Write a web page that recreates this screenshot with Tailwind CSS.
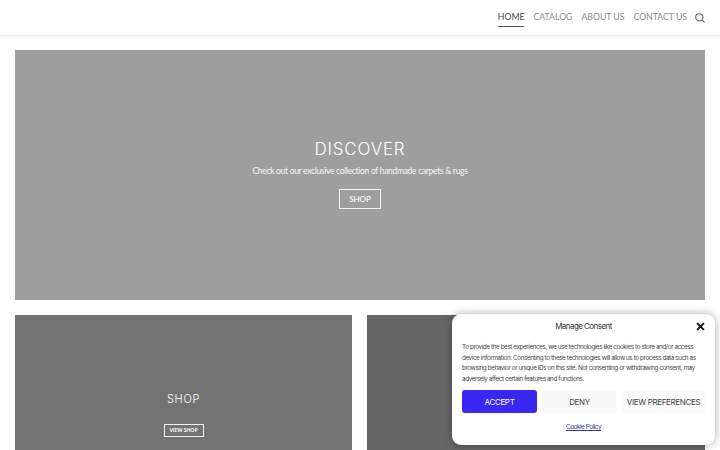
<!doctype html>
<html lang="en">
  <head>
    <meta charset="UTF-8">
    <meta name="viewport" content="width=device-width, initial-scale=1.0">
    <title>Handmade Carpets & Rugs</title>
    <script src="https://cdn.jsdelivr.net/npm/@tailwindcss/browser@4"></script>
  </head>

  <body class="relative h-[450px] w-[720px] overflow-hidden bg-white font-['Lato',sans-serif]">
    <!-- Header -->
    <header class="flex h-[35px] items-center justify-end gap-[8px] pr-[15px] shadow-[0_1px_3px_rgba(0,0,0,0.12)]">
      <nav class="flex items-center gap-[9px] text-[8.7px] leading-none text-[#8a8a8a]">
        <a class="flex h-[18px] items-center border-b border-[#555] text-[#444]">HOME</a>
        <a class="flex h-[18px] items-center border-b border-transparent">CATALOG</a>
        <a class="flex h-[18px] items-center border-b border-transparent">ABOUT US</a>
        <a class="flex h-[18px] items-center border-b border-transparent">CONTACT US</a>
      </nav>
      <svg class="h-[10px] w-[10px] text-[#666]" viewBox="0 0 12 12" fill="none" stroke="currentColor" stroke-width="1.3">
        <circle cx="5.2" cy="5.2" r="4.4"></circle>
        <path d="M8.4 8.4L11.4 11.4"></path>
      </svg>
    </header>

    <main class="flex h-[415px] flex-col gap-[15px] overflow-hidden px-[15px] pt-[15px]">
      <!-- Hero -->
      <section class="flex h-[250px] flex-none flex-col items-center bg-[#9e9e9e] pt-[88px] text-white">
        <h1 class="font-['Inter',sans-serif] text-[17px] leading-[22px] font-light tracking-[0.8px]">DISCOVER</h1>
        <p class="mt-[4px] text-[8.5px] leading-[14px] tracking-[-0.3px] text-white/90">Check out our exclusive collection of handmade carpets &amp; rugs</p>
        <a class="mt-[11px] flex h-[20px] w-[42px] items-center justify-center border border-white/90 text-[8px] font-medium">SHOP</a>
      </section>

      <!-- Categories -->
      <div class="grid flex-none grid-cols-[337px_338px] gap-[15px]">
        <section class="flex h-[250px] flex-col items-center bg-[#737373] pt-[76px] text-white">
          <h2 class="font-['Inter',sans-serif] text-[11px] leading-[16px] font-light tracking-[0.7px]">SHOP</h2>
          <a class="mt-[17px] flex h-[13px] w-[40px] items-center justify-center border border-white/90 text-[5px] font-bold">VIEW SHOP</a>
        </section>
        <section class="h-[250px] bg-[#666666]"></section>
      </div>
    </main>

    <!-- Consent popup -->
    <div class="absolute top-[314px] left-[452px] h-[131px] w-[263px] rounded-[9px] bg-white px-[10px] pt-[7px] font-['Inter',sans-serif] shadow-[0_0_8px_rgba(0,0,0,0.35)]">
      <div class="relative text-center text-[8px] leading-[10px] tracking-[-0.55px] text-[#333]">
        Manage Consent
        <svg class="absolute top-[1px] right-0 h-[9px] w-[9px] text-[#111]" viewBox="0 0 8 8" fill="none" stroke="currentColor" stroke-width="1.8">
          <path d="M1 1L7 7M7 1L1 7"></path>
        </svg>
      </div>
      <p class="mt-[11px] text-[6.3px] leading-[10.5px] tracking-[-0.39px] text-[#444]">To provide the best experiences, we use technologies like cookies to store and/or access device information. Consenting to these technologies will allow us to process data such as browsing behavior or unique IDs on this site. Not consenting or withdrawing consent, may adversely affect certain features and functions.</p>
      <div class="mt-[6px] grid grid-cols-[75px_75px_83px] gap-[5px] text-[8px] tracking-[-0.35px]">
        <button class="flex h-[23px] items-center justify-center rounded-[3px] bg-[#3a27f2] text-white">ACCEPT</button>
        <button class="flex h-[23px] items-center justify-center rounded-[3px] bg-[#f9f9f9] text-[#444]">DENY</button>
        <button class="flex h-[23px] items-center justify-center rounded-[3px] bg-[#f9f9f9] whitespace-nowrap text-[#444]">VIEW PREFERENCES</button>
      </div>
      <div class="mt-[9px] text-center text-[6.5px] leading-[10px] tracking-[-0.5px] text-[#3a3a9a] underline">Cookie Policy</div>
    </div>
  </body>
</html>
